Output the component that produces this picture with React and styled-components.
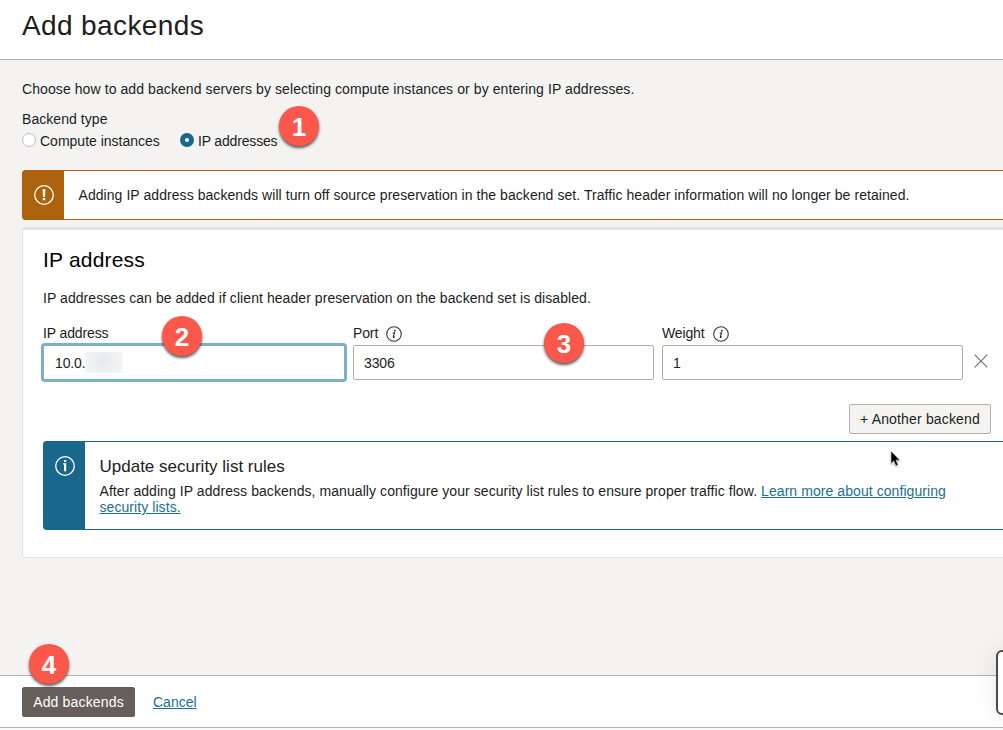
import React from 'react';
import styled, { createGlobalStyle } from 'styled-components';

const GlobalStyle = createGlobalStyle`
  * { box-sizing: border-box; }
  body {
    margin: 0;
    background: #fbfaf9;
    color: #201e1c;
    font: 14px/16px "Liberation Sans", Arial, sans-serif;
    overflow: hidden;
  }
`;

const Panel = styled.div`
  position: relative;
  width: 1003px;
  height: 730px;
  overflow: hidden;
  display: flex;
  flex-direction: column;
`;

const Header = styled.header`
  height: 60px;
  flex: none;
  padding: 9px 22px 0;
  background: #fff;
  border-bottom: 1px solid #b4b2b0;
`;

const Title = styled.h1`
  margin: 0;
  font-size: 28px;
  line-height: 34px;
  font-weight: 400;
  letter-spacing: 0.38px;
`;

const Body = styled.main`
  height: 615px;
  flex: none;
  padding: 21px 0 0 22px;
  background: #f4f3f2;
`;

const Text = styled.p`
  margin: 0;
  white-space: nowrap;
  letter-spacing: ${(p) => p.$track || 0}px;
`;

const GroupLabel = styled(Text)`
  margin-top: 14px;
`;

const RadioGroup = styled.div`
  display: flex;
  gap: 20px;
  margin-top: 5px;
  height: 17px;
`;

const RadioOption = styled.label`
  display: flex;
  align-items: flex-start;
  gap: 4px;
  width: ${(p) => p.$width}px;
  white-space: nowrap;
  letter-spacing: ${(p) => p.$track || 0}px;
  line-height: 18px;
`;

const RadioDot = styled.span`
  flex: none;
  width: 14px;
  height: 14px;
  margin-top: 1px;
  border-radius: 50%;
  background: #fff;
  border: ${(p) => (p.$checked ? '5px solid #1a678c' : '1px solid #b9bec8')};
`;

const Notice = styled.section`
  display: flex;
  width: 1010px;
  height: ${(p) => p.$height}px;
  background: #fff;
  border: 1px solid ${(p) => p.$color};
  border-radius: 3px;
  margin-top: ${(p) => p.$gap}px;
`;

const NoticeIcon = styled.div`
  flex: none;
  width: 41px;
  padding-top: 14px;
  padding-left: 11px;
  background: ${(p) => p.$color};
  svg { display: block; }
`;

const NoticeBody = styled.div`
  padding: ${(p) => p.$top}px 0 0 14.5px;
`;

const NoticeTitle = styled.h3`
  margin: 0 0 7px;
  font-size: 17px;
  line-height: 19px;
  font-weight: 400;
  white-space: nowrap;
`;

const Link = styled.a`
  color: #1a6f92;
  text-decoration: underline;
  text-underline-offset: 1px;
`;

const Card = styled.section`
  width: 1010px;
  height: 331px;
  margin-top: 7px;
  padding: 17px 0 0 20px;
  background: #fff;
  border: 1px solid #e1e2e5;
  border-top: 3px solid #dfe1e4;
  border-radius: 3px;
`;

const CardTitle = styled.h2`
  margin: 0 0 18px;
  color: #000;
  font-size: 21px;
  line-height: 25px;
  font-weight: 400;
  letter-spacing: 0.2px;
`;

const FieldRow = styled.div`
  display: flex;
  gap: 8px;
  margin-top: 19px;
`;

const Field = styled.div`
  width: ${(p) => p.$width}px;
`;

const FieldLabel = styled.div`
  display: flex;
  align-items: center;
  gap: 8px;
  height: 16px;
  margin-bottom: 4px;
  letter-spacing: -0.13px;
  svg { position: relative; top: 1px; }
`;

const InputBox = styled.div`
  display: flex;
  align-items: center;
  height: 35px;
  padding: 1px 0 0 ${(p) => (p.$focused ? 11 : 10)}px;
  background: #fff;
  border: 1px solid ${(p) => (p.$focused ? '#79b1c8' : '#b3aea8')};
  border-radius: 2px;
  box-shadow: ${(p) => (p.$focused ? '0 0 0 2px #79b1c8' : 'none')};
  letter-spacing: -0.15px;
`;

const Redaction = styled.span`
  width: 38px;
  height: 21px;
  margin-top: -1px;
  background: radial-gradient(circle at 48% 40%, #e8e8e9, #eeeff0 45%, #f6f7f8 100%);
`;

const RemoveButton = styled.button`
  width: 16px;
  height: 16px;
  margin: 28px 0 0 2px;
  padding: 0;
  border: 0;
  background: none;
  svg { display: block; }
`;

const CardActions = styled.div`
  display: flex;
  justify-content: flex-end;
  width: 948px;
  margin-top: 24px;
`;

const Button = styled.button`
  width: ${(p) => p.$width}px;
  height: 30px;
  padding: 0;
  border: 1px solid ${(p) => (p.$primary ? '#665e5b' : '#b8b2a9')};
  border-radius: 2px;
  background: ${(p) => (p.$primary ? '#665e5b' : '#f4f3f2')};
  color: ${(p) => (p.$primary ? '#fff' : '#201e1c')};
  font: inherit;
  white-space: nowrap;
  letter-spacing: 0.16px;
`;

const Footer = styled.footer`
  display: flex;
  align-items: center;
  gap: 18px;
  height: 53px;
  flex: none;
  padding: 0 22px;
  background: #fff;
  border-top: 1px solid #b4b2b0;
  border-bottom: 1px solid #b4b2b0;
`;

const Marker = styled.span`
  position: absolute;
  left: ${(p) => p.$x}px;
  top: ${(p) => p.$y}px;
  width: 40px;
  height: 40px;
  border-radius: 50%;
  background: #fb574b;
  color: #fff;
  font-size: 26px;
  line-height: 42px;
  font-weight: 700;
  text-align: center;
  box-shadow: 0 2px 3px rgba(0, 0, 0, 0.65);
`;

const Pointer = styled.svg`
  position: absolute;
  left: 887px;
  top: 448px;
  filter: drop-shadow(0 1px 1px rgba(0, 0, 0, 0.35));
`;

const HelpTab = styled.div`
  position: absolute;
  left: 996px;
  top: 650px;
  width: 40px;
  height: 65px;
  border: 2px solid #4b4b4b;
  border-radius: 6px;
  background: #fff;
  box-shadow: 0 0 22px rgba(0, 0, 0, 0.1);
`;

function InfoIcon() {
  return (
    <svg width="16" height="16" viewBox="0 0 16 16" fill="none">
      <circle cx="8" cy="8" r="7.3" stroke="#3a3836" strokeWidth="1.1" />
      <circle cx="8.8" cy="4.7" r="0.9" fill="#201e1c" />
      <path d="M6.7 7.2 8.5 6.8 7.3 11.1Q7.2 11.8 7.8 11.4L8.7 10.6" stroke="#201e1c" strokeWidth="1.05" />
    </svg>
  );
}

function NoticeGlyph({ kind }) {
  return (
    <svg width="20" height="20" viewBox="0 0 20 20" fill="none">
      <circle cx="10" cy="10" r="9.3" stroke="#fff" strokeWidth="1.3" />
      {kind === 'warning' ? (
        <>
          <path d="M8.6 4.2h2.8L11 12H9Z" fill="#fff" />
          <rect x="8.8" y="13" width="2.4" height="2.2" fill="#fff" />
        </>
      ) : (
        <>
          <rect x="9" y="4" width="2.2" height="2" fill="#fff" />
          <path d="M8.2 7.3h3v8h-2.2V8.6h-.8Z" fill="#fff" />
        </>
      )}
    </svg>
  );
}

export default function App() {
  return (
    <>
      <GlobalStyle />
      <Panel>
        <Header>
          <Title>Add backends</Title>
        </Header>
        <Body>
          <Text $track={0.086}>Choose how to add backend servers by selecting compute instances or by entering IP addresses.</Text>
          <GroupLabel $track={0.06}>Backend type</GroupLabel>
          <RadioGroup>
            <RadioOption $width={138}>
              <RadioDot />
              Compute instances
            </RadioOption>
            <RadioOption $width={98} $track={-0.17}>
              <RadioDot $checked />
              IP addresses
            </RadioOption>
          </RadioGroup>
          <Notice $color="#ad630c" $height={50} $gap={21}>
            <NoticeIcon $color="#ad630c"><NoticeGlyph kind="warning" /></NoticeIcon>
            <NoticeBody $top={16}>
              <Text $track={0.062}>Adding IP address backends will turn off source preservation in the backend set. Traffic header information will no longer be retained.</Text>
            </NoticeBody>
          </Notice>
          <Card>
            <CardTitle>IP address</CardTitle>
            <Text $track={0.065}>IP addresses can be added if client header preservation on the backend set is disabled.</Text>
            <FieldRow>
              <Field $width={302}>
                <FieldLabel>IP address</FieldLabel>
                <InputBox $focused>10.0.<Redaction /></InputBox>
              </Field>
              <Field $width={301}>
                <FieldLabel>Port <InfoIcon /></FieldLabel>
                <InputBox>3306</InputBox>
              </Field>
              <Field $width={301}>
                <FieldLabel>Weight <InfoIcon /></FieldLabel>
                <InputBox>1</InputBox>
              </Field>
              <RemoveButton aria-label="Remove">
                <svg width="16" height="16" viewBox="0 0 16 16">
                  <path d="M1.7 1.7 14.3 14.3M14.3 1.7 1.7 14.3" stroke="#6f6d6b" strokeWidth="1.1" />
                </svg>
              </RemoveButton>
            </FieldRow>
            <CardActions>
              <Button $width={142}>+ Another backend</Button>
            </CardActions>
            <Notice $color="#1a678c" $height={89} $gap={7}>
              <NoticeIcon $color="#1a678c"><NoticeGlyph kind="info" /></NoticeIcon>
              <NoticeBody $top={15}>
                <NoticeTitle>Update security list rules</NoticeTitle>
                <Text $track={0.07}>After adding IP address backends, manually configure your security list rules to ensure proper traffic flow. <Link>Learn more about configuring<br />security lists.</Link></Text>
              </NoticeBody>
            </Notice>
          </Card>
        </Body>
        <Footer>
          <Button $primary $width={113}>Add backends</Button>
          <Link>Cancel</Link>
        </Footer>
        <HelpTab />
        <Marker $x={279} $y={106}>1</Marker>
        <Marker $x={162} $y={316}>2</Marker>
        <Marker $x={544} $y={323}>3</Marker>
        <Marker $x={29} $y={644}>4</Marker>
        <Pointer width="16" height="22" viewBox="0 0 16 22">
          <path d="M4 3V15.6L6.8 12.9 8.9 17.8 11.1 16.9 9 12.2H12.9Z" fill="#000" stroke="#fff" strokeWidth="0.5" />
        </Pointer>
      </Panel>
    </>
  );
}
